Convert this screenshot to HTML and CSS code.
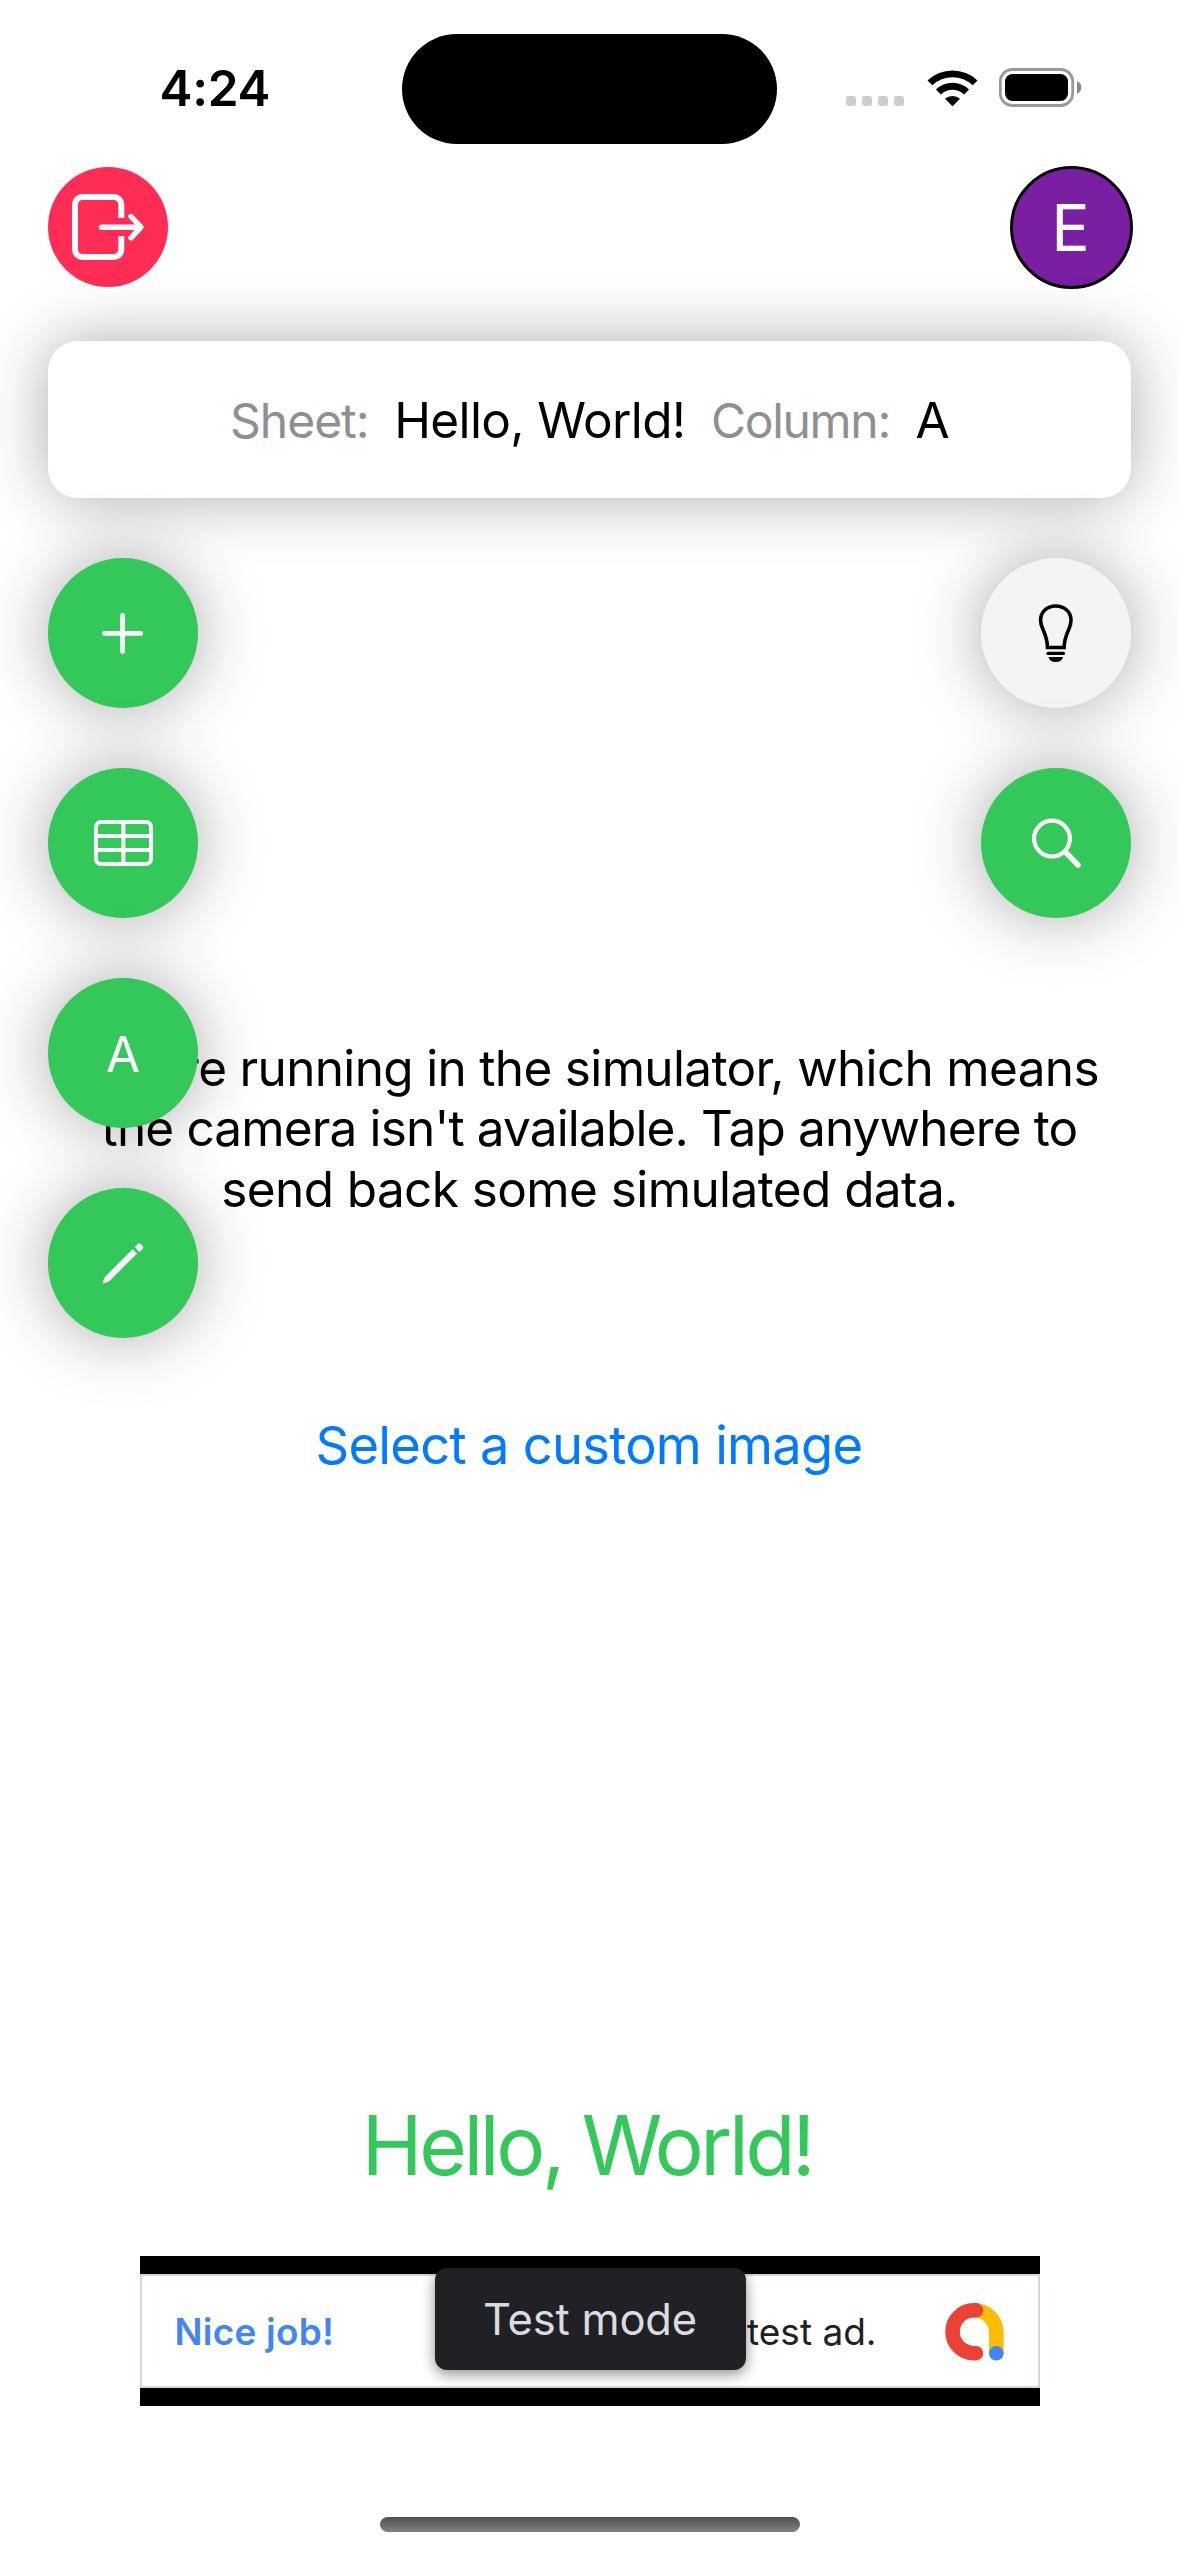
FILE: index.html
```html
<!DOCTYPE html>
<html lang="en">
<head>
<meta charset="utf-8">
<title>Sheet Scanner</title>
<link rel="stylesheet" href="styles.css">
</head>
<body>
<div class="screen">
  <header class="status">
    <time class="clock">4:24</time>
    <div class="island"></div>
    <div class="indicators">
      <svg class="signal" width="58" height="10" viewBox="0 0 58 10" fill="#ccc"><rect width="10" height="10" rx="3"/><rect x="16" width="10" height="10" rx="3"/><rect x="32" width="10" height="10" rx="3"/><rect x="48" width="10" height="10" rx="3"/></svg>
      <svg class="wifi" width="51" height="38" viewBox="0 0 51 38"><path d="M.5 11.400A36.600 36.600 0 0 1 50.500 11.400L45.600 16.200A29.200 29.200 0 0 0 5.400 16.200ZM9 20.600A23.600 23.600 0 0 1 42 20.600L37.100 25.500A16.300 16.300 0 0 0 13.900 25.500ZM18 29.800A11.300 11.300 0 0 1 33 29.800L25.500 37.300Z"/></svg>
      <svg class="battery" width="84" height="39" viewBox="0 0 84 39"><rect x="1.300" y="1.500" width="72.400" height="36" rx="12" fill="none" stroke="#999" stroke-width="2.800"/><rect x="6" y="6" width="63" height="27" rx="7.500"/><path d="M78 13.300a6.600 6.600 0 0 1 0 12.400Z" fill="#888"/></svg>
    </div>
  </header>

  <nav class="topbar">
    <button class="exit" aria-label="Sign out">
      <svg width="120" height="120" viewBox="0 0 120 120" fill="none" stroke="#fff" stroke-width="6"><path d="M73.300 51V37.500a7.500 7.500 0 0 0-7.500-7.500H34.500a7.500 7.500 0 0 0-7.500 7.500V82.500a7.500 7.500 0 0 0 7.500 7.500H65.800a7.500 7.500 0 0 0 7.500-7.500V69.300"/><path d="M53.500 60.200H92M83 49.500l10 10.700-10 10.700" stroke-width="5.400" stroke-linecap="round" stroke-linejoin="round"/></svg>
    </button>
    <div class="avatar">E</div>
  </nav>

  <section class="card">
    <span class="label sheet">Sheet:</span>
    <span class="value">Hello, World!</span>
    <span class="label">Column:</span>
    <span class="value">A</span>
  </section>

  <main class="stage">
    <div class="camera">
      <p class="message">
        <span class="line first">You're running in the simulator, which means</span>
        <span class="line second">the camera isn't available. Tap anywhere to</span>
        <span class="line third">send back some simulated data.</span>
      </p>
      <a class="select">Select a custom image</a>
    </div>
    <div class="tools">
      <div class="column">
        <button class="tool" aria-label="Add"><svg width="150" height="150" viewBox="0 0 150 150" fill="none" stroke="#fff" stroke-width="4.800" stroke-linecap="round"><path d="M74.600 57.400V93.600M56.500 75.400H92.700"/></svg></button>
        <button class="tool" aria-label="Sheet"><svg width="150" height="150" viewBox="0 0 150 150" fill="none" stroke="#fff" stroke-width="4"><rect x="48" y="54" width="55" height="42" rx="5"/><path d="M48 68H103M48 82H103M75.400 54V96"/></svg></button>
        <button class="tool letter">A</button>
        <button class="tool" aria-label="Edit"><svg width="150" height="150" viewBox="0 0 150 150" fill="#fff"><path d="M54.800 94.800C55.300 92.300 56.300 89.600 57.700 88.200L84.700 61.300 89 65.500 62 92.400C60.500 93.900 57.600 94.900 55.300 95.200ZM86.800 59.200L89.300 56.600Q91.300 54.600 93.400 56.600L94.200 57.400Q96.200 59.400 94.200 61.400L91.500 64Z"/></svg></button>
      </div>
      <div class="column">
        <button class="tool light" aria-label="Light"><svg width="150" height="150" viewBox="0 0 150 150" fill="none" stroke="#000"><path d="M66.500 89.500H83.100C83.300 80.500 86 75.500 88 70.800C89.300 67.800 90 65.200 90 62.200C90 54 83.500 48 74.700 48S59.600 54 59.600 62.200C59.600 65.200 60.400 67.800 61.700 70.800C63.700 75.500 66.300 80.500 66.500 89.500Z" stroke-width="3.600"/><path d="M67 95.400H82.500" stroke-width="3.200" stroke-linecap="round"/><path d="M67.500 99H82C81.500 102 78.500 104.100 74.700 104.100S68 102 67.500 99Z" fill="#000" stroke="none"/></svg></button>
        <button class="tool" aria-label="Search"><svg width="150" height="150" viewBox="0 0 150 150" fill="none" stroke="#fff"><circle cx="71" cy="70.600" r="17.900" stroke-width="4.200"/><path d="M84.500 84.200L97 97" stroke-width="5.400" stroke-linecap="round"/></svg></button>
      </div>
    </div>
  </main>

  <h1 class="scanned">Hello, World!</h1>

  <aside class="ad">
    <div class="banner">
      <span class="praise">Nice job!</span>
      <span class="note">test ad.</span>
      <svg class="admob" width="60" height="60" viewBox="0 0 60 60" fill="none" stroke-width="14.600" stroke-linecap="round"><path d="M29 8.200A22.300 22.300 0 0 1 51.300 30.500V51" stroke="#fbbc04"/><path d="M31 8.300H29A21.450 21.450 0 0 0 29 51.200H31" stroke="#ea4335"/><circle cx="51.300" cy="51.300" r="7.300" fill="#4285f4"/></svg>
    </div>
    <div class="badge">Test mode</div>
  </aside>

  <div class="home"></div>
</div>
</body>
</html>
```
FILE: styles.css
```css
* { box-sizing: border-box; }

body {
  margin: 0;
  background: #fff;
  color: #000;
  font-family: Inter, "Liberation Sans", sans-serif;
}

button {
  display: grid;
  place-items: center;
  padding: 0;
  border: 0;
  font: inherit;
}

svg { display: block; flex: none; }

.screen {
  display: flex;
  flex-direction: column;
  width: 1179px;
  height: 2556px;
  overflow: hidden;
  background: #fff;
}

/* status bar */
.status {
  display: grid;
  grid-template-columns: 402px 375px 1fr;
  align-items: start;
  height: 165px;
  padding-top: 34px;
}

.clock {
  padding: 24px 0 0 159.5px;
  font-size: 49.5px;
  font-weight: 600;
  line-height: 60px;
  letter-spacing: -0.3px;
}

.island {
  height: 110px;
  border-radius: 55px;
  background: #000;
}

.indicators {
  display: flex;
  align-items: flex-end;
  height: 73px;
  padding-left: 69px;
}

.signal { margin: 0 23px 1px 0; }
.wifi { margin-right: 21px; }

/* account row */
.topbar {
  display: flex;
  align-items: center;
  justify-content: space-between;
  height: 124px;
  padding: 0 46.5px 0 48px;
}

.exit {
  width: 120px;
  height: 120px;
  border-radius: 50%;
  background: #ff2d55;
}

.avatar {
  display: grid;
  place-items: center;
  width: 123px;
  height: 123px;
  padding-right: 1px;
  border: 3px solid #000;
  border-radius: 50%;
  background: #7b1fa2;
  color: #fff;
  font-size: 64px;
}

/* sheet summary */
.card {
  display: flex;
  align-items: baseline;
  justify-content: center;
  gap: 25.5px;
  height: 157px;
  margin: 52px 48px 0;
  border-radius: 30px;
  background: #fff;
  box-shadow: 0 0 64px rgba(0, 0, 0, 0.33);
  line-height: 158px;
}

.label {
  color: #8e8e93;
  font-size: 48px;
  letter-spacing: -1.3px;
}

.sheet { letter-spacing: -1px; }

.value {
  font-size: 49.5px;
  letter-spacing: -0.62px;
}

/* camera view with floating tools */
.stage {
  display: grid;
  height: 1537px;
  margin-top: 60px;
}

.camera,
.tools { grid-area: 1 / 1; }

.camera {
  display: flex;
  flex-direction: column;
  align-items: center;
  padding-top: 479.6px;
}

.message {
  margin: 0 0 193.4px;
  font-size: 49.5px;
  line-height: 60.6px;
  text-align: center;
}

.line { display: block; white-space: nowrap; }
.first { letter-spacing: -0.67px; }
.second { letter-spacing: -0.85px; }
.third { letter-spacing: -0.59px; }

.select {
  padding-right: 1px;
  color: #007aff;
  font-size: 52.5px;
  line-height: 64px;
  letter-spacing: -0.74px;
}

.tools {
  z-index: 1;
  display: flex;
  justify-content: space-between;
  padding: 0 48px;
}

.column {
  display: flex;
  flex-direction: column;
  gap: 60px;
}

.tool {
  width: 150px;
  height: 150px;
  border-radius: 50%;
  background: #34c759;
  box-shadow: 0 0 66px rgba(0, 0, 0, 0.34);
  color: #fff;
}

.light { background: #f4f4f5; }

.letter {
  padding-top: 2px;
  font-size: 49.5px;
}

.scanned {
  margin: 0;
  padding: 1px 5px 0 0;
  color: #34c759;
  font-size: 81.8px;
  font-weight: 400;
  line-height: 100px;
  letter-spacing: -3.4px;
  text-align: center;
}

/* ad slot */
.ad {
  position: relative;
  align-self: center;
  width: 900px;
  height: 150px;
  margin-top: 60px;
  padding: 18px 0;
  background: #000;
}

.banner {
  display: flex;
  align-items: center;
  height: 114px;
  padding: 0 33px;
  border: 2px solid #cfd8dc;
  background: #fff;
  font-size: 37px;
}

.praise {
  color: #4285f4;
  font-weight: 600;
  letter-spacing: 0.2px;
}

.note {
  margin-left: auto;
  padding-right: 68px;
  color: #202124;
}

.admob { margin-top: 1px; }

.badge {
  position: absolute;
  top: 12px;
  left: 295px;
  width: 311px;
  height: 102px;
  border-radius: 12px;
  background: #202124;
  box-shadow: 0 4px 14px rgba(0, 0, 0, 0.45);
  color: #dadce0;
  font-size: 43.5px;
  line-height: 102px;
  letter-spacing: -0.2px;
  text-align: center;
}

.home {
  align-self: center;
  width: 420px;
  height: 15px;
  margin-top: 111px;
  border-radius: 8px;
  background: linear-gradient(#505050, #828282);
}
```
